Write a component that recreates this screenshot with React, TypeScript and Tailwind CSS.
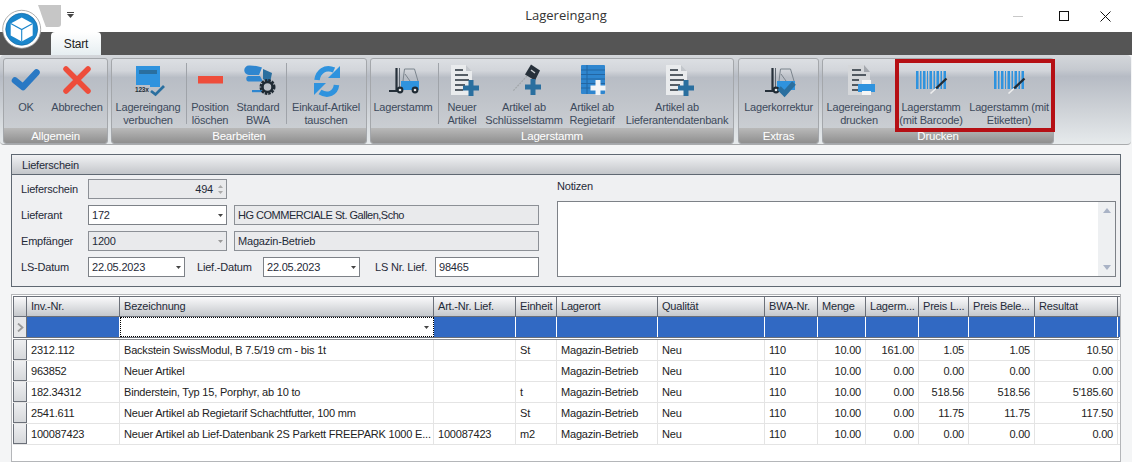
import React from "react";

const Doc = () => (
  <svg width="36" height="36" viewBox="0 0 36 36">
    <path d="M7 2h15l6 6v24H7z" fill="#e9ebed" />
    <path d="M22 2l6 6h-6z" fill="#c3c7cc" />
    <path d="M11 7h8M11 12h13M11 17h14M11 22h10M11 27h8" stroke="#26303a" strokeWidth="1.600" />
    <path d="M27 17v16M19 25h16" stroke="#2a6f9f" strokeWidth="5" />
  </svg>
);

const Lift = ({ check }: { check?: boolean }) => (
  <svg width="36" height="36" viewBox="0 0 36 36">
    <path d="M18 18l1.500-12h10l3.500 12M20 11l5 7" fill="none" stroke="#7b848d" strokeWidth="1" />
    <path d="M11.500 5v22" stroke="#26303a" strokeWidth="2.200" />
    <path d="M14.500 5v20" stroke="#5d6670" strokeWidth="1" />
    <path d="M4 28h9" stroke="#26303a" strokeWidth="1.800" />
    <path d="M16 18h10l2 0h6v9H16z" fill="#2f93de" />
    <circle cx="15" cy="27" r="3.400" fill="#1f2a33" />
    <circle cx="15" cy="27" r="1.300" fill="#e6e6e6" />
    {!check && <circle cx="30" cy="27" r="3.400" fill="#1f2a33" />}
    {!check && <circle cx="30" cy="27" r="1.300" fill="#e6e6e6" />}
    {check && <path d="M18 25l5.500 5.500L33 20" fill="none" stroke="#2a6f9f" strokeWidth="5" />}
  </svg>
);

const Barcode = () => (
  <svg width="36" height="36" viewBox="0 0 36 36">
    <path
      d="M3 8h2.500v18H3zM7 8h1.500v18H7zM10 8h2.500v18H10zM14 8h1v18h-1zM16.500 8h2.500v18h-2.500zM20.500 8h1.500v18h-1.500zM23.500 8h2.500v18h-2.500zM27.500 8h1.500v18h-1.500zM30.500 8h2.500v18h-2.500z"
      fill="#2f93de"
    />
    <path d="M33.500 15.500L23 25.500" stroke="#222c36" strokeWidth="2.400" />
    <path d="M23 25.500L17.500 30.500" stroke="#eeeeee" strokeWidth="1.600" />
  </svg>
);

const icons: Record<string, React.ReactNode> = {
  ok: (
    <svg width="36" height="36" viewBox="0 0 36 36">
      <path d="M7 17.500L15 24l13.500-14.500" fill="none" stroke="#2a79c4" strokeWidth="6.500" strokeLinecap="round" strokeLinejoin="round" />
    </svg>
  ),
  x: (
    <svg width="36" height="36" viewBox="0 0 36 36">
      <path d="M7 6l22 22M29 6L7 28" stroke="#ee4d3b" strokeWidth="5.500" strokeLinecap="round" />
    </svg>
  ),
  verbuchen: (
    <svg width="36" height="36" viewBox="0 0 36 36">
      <path d="M6 3h24v21H20v-2H6z" fill="#2f93de" />
      <rect x="9" y="7" width="18" height="4" fill="#2a6f9f" />
      <text x="5" y="29" fontSize="6.500" fontWeight="700" fill="#26303a" fontFamily="'Liberation Sans',sans-serif">123x</text>
      <path d="M21 28l4.500 3.500L34 23" fill="none" stroke="#2a6f9f" strokeWidth="2.800" />
    </svg>
  ),
  minus: (
    <svg width="36" height="36" viewBox="0 0 36 36">
      <rect x="6" y="13" width="25" height="7.500" fill="#ee4d3b" />
    </svg>
  ),
  bwa: (
    <svg width="36" height="36" viewBox="0 0 36 36">
      <path d="M10 2.500c5 0 9 1 12 2l-3 7.500H9a4.700 4.700 0 010-9.500zM8 13h12l3 5.500H8a3 3 0 010-5.500z" fill="#2f86cf" />
      <path d="M23 6l9 4-2 10-7-4z" fill="#2a6f9f" />
      <rect x="12" y="27" width="10" height="2.200" fill="#2f86cf" />
      <circle cx="27.500" cy="24" r="6.500" fill="none" stroke="#1f2a33" strokeWidth="3" strokeDasharray="2.400 1" />
      <circle cx="27.500" cy="24" r="5" fill="none" stroke="#1f2a33" strokeWidth="2.500" />
    </svg>
  ),
  sync: (
    <svg width="36" height="36" viewBox="0 0 36 36">
      <path d="M9 17C10 9 17 3 26 7" fill="none" stroke="#2f93de" strokeWidth="5.500" />
      <path d="M32 3v12H20z" fill="#2f93de" />
      <path d="M28.500 22C27.500 30 20 34 12 29" fill="none" stroke="#2f93de" strokeWidth="5.500" />
      <path d="M6 32V20h12z" fill="#2f93de" />
    </svg>
  ),
  lift: <Lift />,
  doc: <Doc />,
  key: (
    <svg width="36" height="36" viewBox="0 0 36 36">
      <path d="M21 13L7 28" stroke="#a3a7ab" strokeWidth="1.200" strokeDasharray="2 1" />
      <path d="M25 1.500l9 6-5 10-10-6z" fill="#26303a" />
      <path d="M25 7l4 3" stroke="#c8ccd0" strokeWidth="1.500" />
      <path d="M27 16v16M19 24h16" stroke="#2a6f9f" strokeWidth="5" />
    </svg>
  ),
  tarif: (
    <svg width="36" height="36" viewBox="0 0 36 36">
      <rect x="7" y="2" width="24" height="29" rx="1" fill="#2f86cf" />
      <path d="M7 7h24M7 11.500h24M7 16h24M7 20.500h24M7 25h14M13 2v29" stroke="#2366a3" strokeWidth="1" />
      <path d="M24 17v15M16.500 25h15" stroke="#f3f5f7" strokeWidth="5" />
    </svg>
  ),
  lift2: <Lift check />,
  print: (
    <svg width="36" height="36" viewBox="0 0 36 36">
      <path d="M7 2h16l6 7v23H7z" fill="#d5d7da" />
      <path d="M23 2l6 7h-6z" fill="#a4a8ae" />
      <path d="M11 7h9M11 12h14M11 17h7M11 22h7M11 27h7" stroke="#26303a" strokeWidth="1.500" />
      <rect x="21" y="17" width="9" height="5" fill="#f5f5f5" />
      <rect x="17" y="21" width="17" height="8" fill="#2f93de" />
      <rect x="21" y="28" width="9" height="4" fill="#f5f5f5" />
    </svg>
  ),
  barcode: <Barcode />,
};

function Btn({ w, icon, lines }: { w: string; icon: string; lines: string[] }) {
  return (
    <div className={`${w} shrink-0 flex flex-col items-center pt-[4px]`}>
      <div className="h-[36px] w-[36px]">{icons[icon]}</div>
      <div className="mt-[2px] text-[11px] leading-[13px] text-[#3d4a5c] text-center whitespace-nowrap">
        {lines.map((l) => (
          <div key={l}>{l}</div>
        ))}
      </div>
    </div>
  );
}

const Sep = ({ ml }: { ml: string }) => <div className={`${ml} mt-[4px] h-[61px] w-px shrink-0 bg-[#9fa3a9]`} />;

function Group({ w, label, children }: { w: string; label: string; children: React.ReactNode }) {
  return (
    <div className={`${w} shrink-0 h-[86px] flex flex-col rounded-[3px] border border-[#a4a7ab] overflow-hidden bg-[linear-gradient(#dcdfe3_0%,#d2d5da_14%,#b8bdc5_22%,#c0c4ca_50%,#d0d3d7_100%)]`}>
      <div className="flex h-[70px]">{children}</div>
      <div className="h-[15px] text-center text-[11.500px] leading-[16px] text-white bg-[linear-gradient(#b9b9b9,#8f8f8f)]">{label}</div>
    </div>
  );
}

const Tri = ({ up, color = "#444", w = 5, h = 3 }: { up?: boolean; color?: string; w?: number; h?: number }) => (
  <svg width={w} height={h} viewBox="0 0 7 4" preserveAspectRatio="none">
    <path d={up ? "M0 4l3.500-4L7 4z" : "M0 0h7L3.500 4z"} fill={color} />
  </svg>
);

function Field({ w, value, disabled, caret, tight }: { w: string; value: string; disabled?: boolean; caret?: boolean; tight?: boolean }) {
  return (
    <div className={`${w} shrink-0 h-[20px] flex items-center border ${disabled ? "bg-[#e9eaec] border-[#8c9096]" : "bg-white border-[#7d8187]"} px-[3px] text-[#1f2a38]`}>
      <span className={`flex-1 whitespace-nowrap ${tight ? "tracking-[-0.5px]" : ""}`}>{value}</span>
      {caret && (
        <span className="flex items-center">
          <Tri color={disabled ? "#999" : "#444"} />
        </span>
      )}
    </div>
  );
}

const Label = ({ w, ml, children }: { w: string; ml?: string; children: React.ReactNode }) => (
  <div className={`${w} ${ml ?? ""} shrink-0 text-[#1f2a38] whitespace-nowrap`}>{children}</div>
);

const cols = "grid grid-cols-[14px_93px_314px_82px_41px_101px_107px_53px_48px_53px_50px_66px_83px]";

const headers = ["Inv.-Nr.", "Bezeichnung", "Art.-Nr. Lief.", "Einheit", "Lagerort", "Qualität", "BWA-Nr.", "Menge", "Lagerm...", "Preis L...", "Preis Bele...", "Resultat"];

const rows = [
  ["2312.112", "Backstein SwissModul, B 7.5/19 cm - bis 1t", "", "St", "161.00", "1.05", "1.05", "10.50"],
  ["963852", "Neuer Artikel", "", "", "0.00", "0.00", "0.00", "0.00"],
  ["182.34312", "Binderstein, Typ 15, Porphyr, ab 10 to", "", "t", "0.00", "518.56", "518.56", "5'185.60"],
  ["2541.611", "Neuer Artikel ab Regietarif Schachtfutter, 100 mm", "", "St", "0.00", "11.75", "11.75", "117.50"],
  ["100087423", "Neuer Artikel ab Lief-Datenbank 2S Parkett FREEPARK 1000 E...", "100087423", "m2", "0.00", "0.00", "0.00", "0.00"],
];

function Cell({ children, right }: { children?: React.ReactNode; right?: boolean }) {
  return (
    <div className={`h-full border-r border-[#e4e4e4] px-[4px] flex items-center overflow-hidden whitespace-nowrap text-[#222] ${right ? "justify-end" : ""}`}>
      {children}
    </div>
  );
}

export default function App() {
  return (
    <div className="relative w-[1132px] h-[462px] overflow-hidden flex flex-col bg-[#f4f5f6] font-['Liberation_Sans',sans-serif] text-[11px] tracking-[-0.2px]">
      {/* title bar */}
      <div className="relative h-[32px] shrink-0 bg-white flex items-center">
        <div className="w-[1132px] text-center text-[13px] tracking-normal text-[#333] font-['Open_Sans',sans-serif]">Lagereingang</div>
        <div className="absolute left-[67px] top-[12px] flex flex-col items-center gap-[1px]">
          <div className="h-px w-[7px] bg-[#444]" />
          <Tri w={7} h={4} />
        </div>
        <div className="absolute right-0 top-0 h-[32px] flex items-center">
          <div className="w-[46px] flex justify-center"><div className="h-px w-[10px] bg-[#c8c8c8]" /></div>
          <div className="w-[45px] flex justify-center"><div className="h-[10px] w-[10px] border border-[#111]" /></div>
          <div className="w-[46px] pr-[8px] flex justify-center">
            <svg width="11" height="11" viewBox="0 0 11 11"><path d="M.5.500l10 10M10.500.500l-10 10" stroke="#111" strokeWidth="1" /></svg>
          </div>
        </div>
      </div>
      {/* tab strip */}
      <div className="h-[23px] shrink-0 bg-[#555555] pl-[51px]">
        <div className="w-[50px] h-[23px] rounded-t-[4px] bg-[linear-gradient(#ffffff,#e6eef1)] text-center text-[12px] leading-[24px] text-[#222]">Start</div>
      </div>
      {/* logo */}
      <svg className="absolute left-0 top-0" width="64" height="52" viewBox="0 0 64 52">
        <path d="M34 5h27v19a3 3 0 01-3 3H34z" fill="#c6c6c6" />
        <path d="M33 5h5c3 8 6 17 8 22H33z" fill="#ffffff" />
        <circle cx="21.700" cy="29.300" r="19" fill="#ffffff" stroke="#9a9a9a" strokeWidth="0.800" />
        <circle cx="21.700" cy="29.300" r="16" fill="#1a86cc" stroke="#0e5f98" strokeWidth="0.600" />
        <path d="M21.700 17.500l11 6v12l-11 6-11-6v-12z" fill="#ffffff" />
        <path d="M10.700 23.500l11 6 11-6M21.700 29.500v12" fill="none" stroke="#1a86cc" strokeWidth="1.100" />
      </svg>
      {/* ribbon */}
      <div className="relative h-[90px] shrink-0 w-[1131px] rounded-[4px] pl-[3px] pt-[3px] flex items-start bg-[linear-gradient(#d4d7db_0%,#c6cad0_16%,#b6bbc4_24%,#cdd1d6_60%,#e6eaec_100%)] border-b border-[#a9abad]">
        <Group w="w-[105px]" label="Allgemein">
          <Btn w="w-[44px]" icon="ok" lines={["OK"]} />
          <Btn w="w-[58px]" icon="x" lines={["Abbrechen"]} />
        </Group>
        <div className="w-[3px] shrink-0" />
        <Group w="w-[256px]" label="Bearbeiten">
          <Btn w="w-[72px]" icon="verbuchen" lines={["Lagereingang", "verbuchen"]} />
          <Sep ml="ml-[2px]" />
          <Btn w="w-[46px]" icon="minus" lines={["Position", "löschen"]} />
          <Btn w="w-[50px]" icon="bwa" lines={["Standard", "BWA"]} />
          <Sep ml="ml-[3px]" />
          <Btn w="w-[78px]" icon="sync" lines={["Einkauf-Artikel", "tauschen"]} />
        </Group>
        <div className="w-[3px] shrink-0" />
        <Group w="w-[364px]" label="Lagerstamm">
          <Btn w="w-[64px]" icon="lift" lines={["Lagerstamm"]} />
          <Sep ml="ml-[3px]" />
          <Btn w="w-[46px]" icon="doc" lines={["Neuer", "Artikel"]} />
          <Btn w="w-[78px]" icon="key" lines={["Artikel ab", "Schlüsselstamm"]} />
          <Btn w="w-[58px]" icon="tarif" lines={["Artikel ab", "Regietarif"]} />
          <Btn w="w-[112px]" icon="doc" lines={["Artikel ab", "Lieferantendatenbank"]} />
        </Group>
        <div className="w-[4px] shrink-0" />
        <Group w="w-[81px]" label="Extras">
          <Btn w="w-[79px]" icon="lift2" lines={["Lagerkorrektur"]} />
        </Group>
        <div className="w-[3px] shrink-0" />
        <Group w="w-[232px]" label="Drucken">
          <Btn w="w-[72px]" icon="print" lines={["Lagereingang", "drucken"]} />
          <Btn w="w-[72px]" icon="barcode" lines={["Lagerstamm", "(mit Barcode)"]} />
          <Btn w="w-[84px]" icon="barcode" lines={["Lagerstamm (mit", "Etiketten)"]} />
        </Group>
        <div className="absolute left-[895px] top-[4px] w-[160px] h-[73px] border-[4px] border-[#b50f14]" />
      </div>
      {/* Lieferschein panel */}
      <div className="ml-[11px] mt-[9px] w-[1110px] h-[133px] shrink-0 border border-[#5f6872] bg-[#eff0f2] flex flex-col">
        <div className="h-[20px] shrink-0 border-b border-[#5f6872] bg-[linear-gradient(#f1f2f4,#c3c6ca)] pl-[10px] leading-[21px] text-[#1f2a38]">Lieferschein</div>
        <div className="flex pl-[9px]">
          <div className="w-[518px] shrink-0 flex flex-col gap-[6px] pt-[4px]">
            <div className="flex items-center">
              <Label w="w-[67px]">Lieferschein</Label>
              <div className="w-[139px] h-[20px] shrink-0 flex items-center border bg-[#e9eaec] border-[#8c9096] px-[3px] text-[#1f2a38]">
                <span className="flex-1 text-right pr-[5px]">494</span>
                <span className="flex flex-col gap-[3px]">
                  <Tri up color="#aaa" />
                  <Tri color="#aaa" />
                </span>
              </div>
            </div>
            <div className="flex items-center">
              <Label w="w-[67px]">Lieferant</Label>
              <Field w="w-[139px]" value="172" caret />
              <div className="w-[7px] shrink-0" />
              <Field w="w-[305px]" value="HG COMMERCIALE St. Gallen,Scho" disabled tight />
            </div>
            <div className="flex items-center">
              <Label w="w-[67px]">Empfänger</Label>
              <Field w="w-[139px]" value="1200" caret disabled />
              <div className="w-[7px] shrink-0" />
              <Field w="w-[305px]" value="Magazin-Betrieb" disabled />
            </div>
            <div className="flex items-center">
              <Label w="w-[67px]">LS-Datum</Label>
              <Field w="w-[97px]" value="22.05.2023" caret />
              <Label w="w-[66px]" ml="ml-[12px]">Lief.-Datum</Label>
              <Field w="w-[97px]" value="22.05.2023" caret />
              <Label w="w-[60px]" ml="ml-[15px]">LS Nr. Lief.</Label>
              <Field w="w-[104px]" value="98465" />
            </div>
          </div>
          <div className="ml-[18px] w-[559px] shrink-0 flex flex-col">
            <div className="h-[26px] pb-[4px] flex items-center text-[#1f2a38]">Notizen</div>
            <div className="h-[76px] border border-[#7d8187] bg-white flex justify-end">
              <div className="w-[17px] h-full bg-[#eef0f2] flex flex-col items-center justify-between py-[6px]">
                <Tri up color="#a9b3c6" w={8} h={5} />
                <Tri color="#a9b3c6" w={8} h={5} />
              </div>
            </div>
          </div>
        </div>
      </div>
      {/* grid */}
      <div className="ml-[11px] mt-[7px] w-[1110px] flex-1 border border-[#b4b6b9] bg-white pl-[1px] pt-[1px]">
        <div className={`${cols} h-[20px] border-t border-[#6b7079] bg-[linear-gradient(#fafafb,#c5c8cc)] text-[#1f2a38]`}>
          <div className="h-full border-x border-[#6b7079]" />
          {headers.map((h) => (
            <div key={h} className="h-full border-r border-[#6b7079] px-[4px] flex items-center whitespace-nowrap overflow-hidden">{h}</div>
          ))}
        </div>
        <div className={`${cols} h-[21px] bg-[#3169c3] border-t border-[#6b7079]`}>
          <div className="h-full border-x border-[#6b7079] bg-[#e6e7e9] flex items-center justify-center">
            <svg width="7" height="9" viewBox="0 0 7 9"><path d="M1 .500L5.500 4.500 1 8.500" fill="none" stroke="#9a9a9a" strokeWidth="1.800" /></svg>
          </div>
          <div className="h-full border-r border-white" />
          <div className="h-full bg-white border border-dotted border-black flex items-center justify-end pr-[4px]">
            <Tri />
          </div>
          {headers.slice(2).map((h) => (
            <div key={h} className="h-full border-r border-white" />
          ))}
        </div>
        <div className="h-[3px] w-[1106px] border-t border-[#6b7079] border-b border-b-[#8a8d92] bg-white" />
        {rows.map((r) => (
          <div key={r[0]} className={`${cols} h-[21px] border-b border-[#e4e4e4]`}>
            <div className="h-full border-x border-b border-[#6b7079] bg-[linear-gradient(#eeeff1,#d6d8db)]" />
            <Cell>{r[0]}</Cell>
            <Cell>{r[1]}</Cell>
            <Cell>{r[2]}</Cell>
            <Cell>{r[3]}</Cell>
            <Cell>Magazin-Betrieb</Cell>
            <Cell>Neu</Cell>
            <Cell>110</Cell>
            <Cell right>10.00</Cell>
            <Cell right>{r[4]}</Cell>
            <Cell right>{r[5]}</Cell>
            <Cell right>{r[6]}</Cell>
            <Cell right>{r[7]}</Cell>
          </div>
        ))}
      </div>
    </div>
  );
}
